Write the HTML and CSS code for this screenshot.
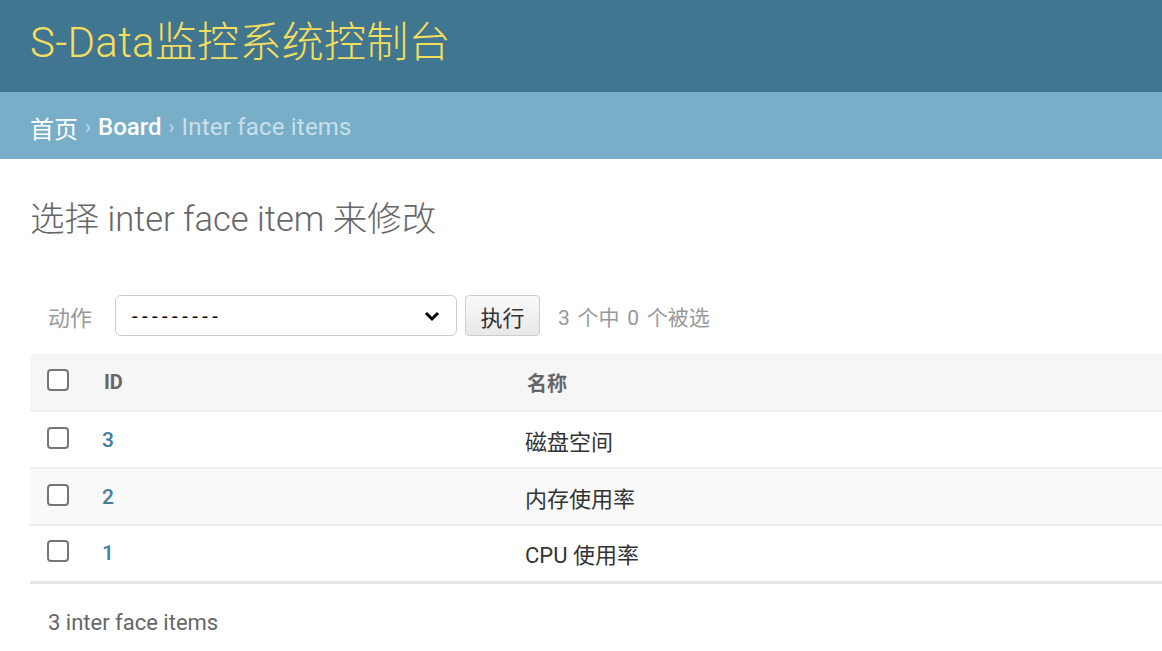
FILE: index.html
```html
<!DOCTYPE html>
<html lang="zh">
<head>
<meta charset="utf-8">
<title>S-Data监控系统控制台</title>
<link rel="stylesheet" href="styles.css">
</head>
<body>
<header class="header">
  <h1 class="brand">S-Data监控系统控制台</h1>
</header>
<nav class="breadcrumbs">
  <a href="#">首页</a><span class="sep">›</span><a href="#">Board</a><span class="sep">›</span><span class="current">Inter face items</span>
</nav>
<main class="content">
  <h2 class="page-title">选择 inter face item 来修改</h2>
  <div class="actions">
    <span class="actions-label">动作</span>
    <div class="select">
      <span class="dashes">---------</span>
      <svg class="chev" width="16" height="12" viewBox="0 0 16 12"><path d="M2 3 L8 9 L14 3" fill="none" stroke="#000" stroke-width="3"/></svg>
    </div>
    <button class="go">执行</button>
    <span class="counter">3 个中 0 个被选</span>
  </div>
  <table class="results">
    <thead>
      <tr><th class="c-check"><span class="cb"></span></th><th class="c-id">ID</th><th class="c-name">名称</th></tr>
    </thead>
    <tbody>
      <tr><td class="c-check"><span class="cb"></span></td><td class="c-id"><a href="#">3</a></td><td class="c-name"><span class="name">磁盘空间</span></td></tr>
      <tr class="alt"><td class="c-check"><span class="cb"></span></td><td class="c-id"><a href="#">2</a></td><td class="c-name"><span class="name">内存使用率</span></td></tr>
      <tr><td class="c-check"><span class="cb"></span></td><td class="c-id"><a href="#">1</a></td><td class="c-name"><span class="name">CPU 使用率</span></td></tr>
    </tbody>
  </table>
  <p class="paginator">3 inter face items</p>
</main>
</body>
</html>
```
FILE: styles.css
```css
* { box-sizing: border-box; }
html, body { margin: 0; padding: 0; background: #fff; }
body {
  font-family: Roboto, "Noto Sans CJK SC", "Liberation Sans", sans-serif;
  color: #333;
  overflow: hidden;
}
.header {
  height: 92px;
  background: #417690;
  display: flex;
  align-items: center;
  padding-left: 30px;
}
.brand {
  margin: 0;
  font-size: 42px;
  font-weight: 300;
  color: #f5dd5d;
  line-height: 1;
  letter-spacing: 0.3px;
  position: relative;
  top: -3px;
}
.breadcrumbs {
  height: 67px;
  background: #79aec8;
  display: flex;
  align-items: center;
  padding-left: 30px;
  padding-top: 3px;
  font-size: 24px;
  color: #c4dce8;
}
.breadcrumbs a { color: #fff; text-decoration: none; }
.breadcrumbs a:nth-of-type(2) { font-weight: 500; }
.breadcrumbs .sep { margin: 0 7px; color: #c4dce8; font-size: 20px; }
.breadcrumbs .current { color: #c8dfea; letter-spacing: 0.2px; }
.content { padding: 0 0 0 30px; }
.page-title {
  margin: 0;
  padding-top: 40px;
  height: 136px;
  font-size: 34.5px;
  font-weight: 300;
  color: #666;
  line-height: 40px;
}
.actions {
  display: flex;
  align-items: center;
  height: 41px;
  margin-left: 18px;
}
.actions-label { font-size: 22px; color: #999; width: 67px; }
.select {
  width: 342px;
  height: 41px;
  border: 1px solid #ccc;
  border-radius: 6px;
  display: flex;
  align-items: center;
  justify-content: space-between;
  padding: 0 16px 0 16px;
  font-size: 20px;
  color: #000;
}
.dashes { letter-spacing: 4.5px; }
.chev { margin-top: 1px; }
.go {
  margin-left: 8px;
  width: 75px;
  height: 41px;
  border: 1px solid #ccc;
  border-radius: 4px;
  background: linear-gradient(#fafafa, #e8e8e8);
  font-family: inherit;
  font-size: 22px;
  color: #333;
  padding: 0;
}
.counter { margin-left: 18px; font-size: 21px; color: #999; word-spacing: 2.5px; }
.results {
  margin-top: 18px;
  width: 1132px;
  border-collapse: collapse;
}
.results th, .results td {
  height: 57px;
  padding: 0;
  text-align: left;
  vertical-align: middle;
}
.results thead tr { background: #f6f6f6; }
.results tbody tr { border-top: 2px solid #eee; }
.results tbody tr:last-child { border-bottom: 3px solid #e6e6e6; }
.results tr.alt { background: #f9f9f9; }
.c-check { width: 74px; padding-left: 17px !important; }
.c-id { width: 423px; }
.cb {
  display: block;
  width: 22px;
  height: 22px;
  border: 2px solid #767676;
  border-radius: 4px;
  background: #fff;
  margin-top: -4px;
}
.results th { font-size: 20px; font-weight: 700; color: #666; }
.results td.c-id a { color: #447e9b; text-decoration: none; font-size: 21px; font-weight: 500; margin-left: -2px; }
.results td.c-name { font-size: 22px; color: #333; }
.name { margin-left: -2px; }
.paginator {
  margin: 0;
  padding: 26px 0 0 18px;
  font-size: 22px;
  color: #666;
}
```
